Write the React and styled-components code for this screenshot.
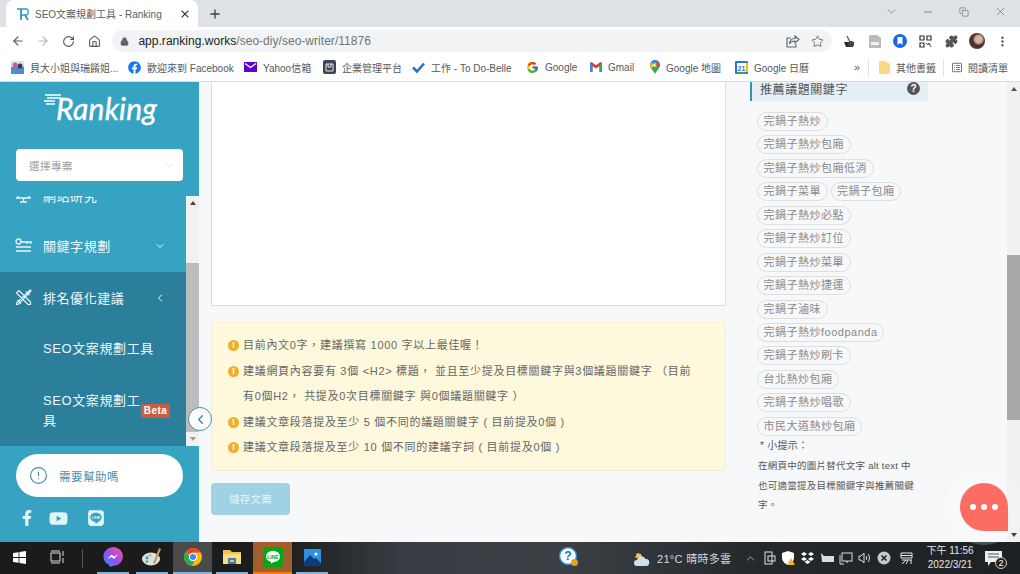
import React from "react";
import styled, { createGlobalStyle } from "styled-components";
import { ArrowLeft, ArrowRight, RotateCw, Home, Lock, Star, Puzzle, MoreVertical, Plus, X, ChevronDown, ChevronLeft, ChevronUp, Minus, Copy, AlertCircle } from "lucide-react";
import { FaFacebookF, FaYoutube, FaLine, FaFacebook } from "react-icons/fa";
import { FcGoogle } from "react-icons/fc";

const Global = createGlobalStyle`
  html, body { margin: 0; padding: 0; background: #fff; }
  * { box-sizing: border-box; }
  body { font-family: "Liberation Sans", "Noto Sans CJK TC", sans-serif; }
`;
const Root = styled.div`
  position: relative; width: 1020px; height: 574px; overflow: hidden;
  display: flex; flex-direction: column;
`;
const TabStrip = styled.div`
  height: 27px; background: #dee1e6; display: flex; align-items: stretch; padding-left: 6px; flex: none;
`;
const Tab = styled.div`
  width: 192px; background: #fff; border-radius: 8px 8px 0 0; display: flex; align-items: center;
  padding: 0 7px 0 11px; gap: 6px; font-size: 10px; color: #5a5e63;
`;
const TabTitle = styled.span` flex: 1; white-space: nowrap; `;
const NewTab = styled.div` width: 34px; display: flex; align-items: center; justify-content: center; color: #3c4043; `;
const WindowControls = styled.div`
  margin-left: auto; display: flex; align-items: center; color: #4a4d50; padding-right: 1px;
`;
const WinBtn = styled.div` width: 36.5px; display: flex; justify-content: center; align-items: center; padding-bottom: 4px; `;
const Toolbar = styled.div`
  height: 26px; flex: none; background: #fff; display: flex; align-items: center; color: #5f6368; padding: 2px 0 0 5px;
`;
const NavBtn = styled.div`
  width: 25.6px; display: flex; justify-content: center; color: ${p => p.$dim ? "#b6b9bd" : "#55585c"};
`;
const Address = styled.div`
  margin-left: 5px; width: 720px; height: 22px; background: #f1f3f4; border-radius: 11px; display: flex; align-items: center;
  padding: 0 2px 0 8px; font-size: 12px; color: #70757a;
`;
const Url = styled.span` margin-left: 9px; flex: 1; letter-spacing: 0.03px; b { font-weight: 400; color: #202124; } `;
const AddressIcon = styled.div` width: 25px; display: flex; justify-content: center; color: #5f6368; `;
const ExtArea = styled.div` display: flex; align-items: center; margin-left: 4px; `;
const Ext = styled.div` width: 25.5px; display: flex; justify-content: center; align-items: center; `;
const Avatar = styled.div`
  width: 16px; height: 16px; border-radius: 50%;
  background: radial-gradient(circle at 60% 40%, #d9b7a8 0 25%, #4a2c2a 45%, #6b4a52 100%);
`;
const Bookmarks = styled.div`
  height: 29px; flex: none; background: #fff; border-bottom: 1px solid #dadce0; display: flex; align-items: center;
  padding-left: 11px; font-size: 10px; color: #55585c;
`;
const Bookmark = styled.div`
  display: flex; align-items: center; gap: 6px; white-space: nowrap; width: ${p => p.$w}px; flex: none;
`;
const BookmarkSep = styled.div` width: 1px; height: 17px; background: #dfe1e5; margin-right: ${p => p.$mr}px; flex: none; `;
const Chevrons = styled.span` margin-left: 12px; font-size: 11px; width: 14px; flex: none; `;
const Page = styled.div` flex: 1; min-height: 0; display: flex; background: #f7f8fa; `;
const Sidebar = styled.aside`
  width: 199px; flex: none; background: #36a3c2; display: flex; flex-direction: column; color: #fff;
`;
const LogoWrap = styled.div`
  height: 67px; flex: none; display: flex; align-items: flex-start; justify-content: center; padding: 7px 0 0 1px;
`;
const LogoText = styled.span`
  font-family: Lato, sans-serif; font-style: italic; font-size: 30px; font-weight: 400; letter-spacing: 0.2px; line-height: 38px;
  -webkit-text-stroke: 0.4px #fff; margin-left: -5px;
`;
const SelectBox = styled.div`
  margin: 0 16px; height: 32px; flex: none; background: #fff; border-radius: 4px; display: flex; align-items: center;
  justify-content: space-between; padding: 0 7px 0 13px; font-size: 10.5px; color: #9a9a9a; letter-spacing: 0.5px;
`;
const NavArea = styled.div` margin-top: 15px; height: 250px; flex: none; display: flex; overflow: hidden; `;
const NavList = styled.nav` width: 186px; flex: none; margin-top: -26px; `;
const NavItem = styled.div`
  height: 51px; display: flex; align-items: center; padding: 0 20px ${p => p.$up ? 2 : 0}px 15px; font-size: 13px; letter-spacing: 0.55px; color: #eef8fb;
`;
const NavIcon = styled.div` width: 28px; flex: none; display: flex; `;
const NavLabel = styled.span` flex: 1; `;
const ActiveGroup = styled.div` background: #2b7f9b; height: 174px; `;
const SubItem = styled.div`
  position: relative; height: ${p => p.$h}px; padding-left: 43px; display: flex; align-items: center;
  font-size: 13px; letter-spacing: 0.6px; line-height: 20px; color: #eef8fb;
`;
const SubLabel = styled.span` max-width: ${p => p.$mw ? `${p.$mw}px` : "none"}; `;
const Beta = styled.span`
  position: absolute; left: 141px; top: 29px; width: 29px; height: 14px; border-radius: 2px; background: #cc5c3f;
  color: #fff; font-size: 10px; font-weight: 700; letter-spacing: 0.4px; line-height: 14px; text-align: center;
`;
const ScrollTrack = styled.div`
  width: 13px; flex: none; background: #f1f1f1; display: flex; flex-direction: column; align-items: center;
`;
const ArrowUp = styled.div`
  width: 0; height: 0; border-left: 3.5px solid transparent; border-right: 3.5px solid transparent; border-bottom: 4px solid ${p => p.$c};
  margin-top: 5px; flex: none;
`;
const ArrowDown = styled.div`
  width: 0; height: 0; border-left: 3.5px solid transparent; border-right: 3.5px solid transparent; border-top: 4px solid ${p => p.$c};
  margin-top: auto; margin-bottom: 5px; flex: none;
`;
const Thumb = styled.div`
  width: 100%; margin-top: ${p => p.$top}px; height: ${p => p.$h}px; background: ${p => p.$c}; flex: none;
`;
const SideFooter = styled.div` flex: 1; padding: 8px 16px 0; `;
const HelpBtn = styled.div`
  height: 43px; background: #fff; border-radius: 22px; display: flex; align-items: center; gap: 11px; padding-left: 13px;
  color: #4c8fa9; font-size: 11.5px; letter-spacing: 0.5px;
`;
const Socials = styled.div` display: flex; align-items: center; margin-top: 12px; color: #e4f3f7; padding-left: 3px; height: 18px; `;
const SocialIcon = styled.div` width: ${p => p.$w}px; flex: none; display: flex; `;
const Main = styled.main` width: 515px; flex: none; margin-left: 12px; `;
const Editor = styled.div` height: 224px; background: #fff; border: 1px solid #dcdee0; border-top: none; `;
const Alert = styled.div`
  margin-top: 16px; height: 149px; background: #fef8dd; border: 1px solid #f8eec6; border-radius: 4px; padding: 10px 30px 0 16px;
  font-size: 11px; color: #666; letter-spacing: 0.7px; line-height: 25.5px;
`;
const AlertRow = styled.div` display: flex; align-items: flex-start; gap: 4px; `;
const AlertDot = styled.span`
  width: 11px; height: 11px; border-radius: 50%; background: #efaf27; color: #fff; font-size: 9px; font-weight: 700; line-height: 11px;
  text-align: center; flex: none; margin-top: 7px; letter-spacing: 0;
`;
const SaveBtn = styled.button`
  margin-top: 12px; display: block; width: 79px; height: 32px; background: #9fd2e3; color: #e6f4f8; border: none; border-radius: 4px;
  font: inherit; font-size: 10.5px; letter-spacing: 0.3px; padding: 0 0 1px;
`;
const Right = styled.section` width: 178px; flex: none; margin-left: 24px; `;
const SectionHead = styled.div`
  height: 19px; background: #e4f0f6; border-left: 2px solid #3b90ad; display: flex; align-items: center; justify-content: space-between;
  padding: 0 8px 6px 8px; font-size: 12px; color: #555; letter-spacing: 0.57px; margin-bottom: 11px;
`;
const HeadHelp = styled.span`
  width: 13px; height: 13px; border-radius: 50%; background: #555; color: #fff; font-size: 10px; font-weight: 700; line-height: 13px; text-align: center; letter-spacing: 0;
`;
const ChipRow = styled.div` display: flex; gap: 3px; margin: 0 0 4.45px 7px; `;
const Chip = styled.span`
  height: 19px; padding: 0 5.5px; border: 1px solid #dcdee0; border-radius: 10px; font-size: 11px; letter-spacing: 0.5px; line-height: 17px;
  color: #8a8a8a; white-space: nowrap;
`;
const Hint = styled.div` margin: -4px 0 0 8px; width: 158px; font-size: 9.5px; line-height: 19.7px; color: #555; letter-spacing: 0.25px; `;
const HintHead = styled.div` padding-left: 2px; font-size: 10px; `;
const PageScroll = styled(ScrollTrack)` margin-left: auto; `;
const Collapse = styled.div`
  position: absolute; left: 188px; top: 407px; width: 24px; height: 24px; border-radius: 50%; background: #fff; border: 1px solid #3f8fac;
  display: flex; align-items: center; justify-content: center; color: #2f87a8;
`;
const ChatHalo = styled.div`
  position: absolute; left: 946px; top: 469px; width: 76px; height: 76px; border-radius: 50%; background: rgba(255,255,255,0.2);
`;
const Chat = styled.div`
  position: absolute; left: 960px; top: 483px; width: 48px; height: 48px; background: #fb6d63; border-radius: 50% 50% 0 50%;
  display: flex; align-items: center; justify-content: center; gap: 5px;
`;
const ChatDot = styled.span` width: 6px; height: 6px; border-radius: 50%; background: #fff; `;
const Taskbar = styled.div`
  height: 32px; flex: none; display: flex; align-items: stretch; color: #fff;
  background: linear-gradient(90deg, #1b1b1b 0, #1c1c1c 280px, #373d42 400px, #3b4045 560px, #24282b 760px, #1e2124 1020px);
`;
const TaskSlot = styled.div`
  width: ${p => p.$w}px; margin-left: ${p => p.$ml || 0}px; flex: none; display: flex; align-items: center; justify-content: center; position: relative;
  background: ${p => p.$bg || "transparent"}; padding-bottom: 2px;
  &::after {
    content: ""; display: ${p => p.$line ? "block" : "none"}; position: absolute; left: 0; right: 0; bottom: 0; height: 2px; background: ${p => p.$line};
  }
`;
const Divider = styled.div` width: 1px; height: 19px; background: #555; align-self: center; margin-left: 6px; `;
const Weather = styled.div`
  margin-left: 53px; display: flex; align-items: center; gap: 7px; font-size: 11px; color: #d5d7d9; width: 109px; flex: none; letter-spacing: 0.3px;
`;
const Tray = styled.div` display: flex; align-items: center; color: #e8e8e8; flex: none; `;
const TrayIcon = styled.div` width: 19px; margin-left: ${p => p.$ml || 0}px; display: flex; justify-content: center; align-items: center; `;
const Clock = styled.div`
  margin-left: 9px; width: 50px; flex: none; font-size: 10px; line-height: 14.5px; color: #e6e6e6; text-align: center; align-self: center;
`;
const Notify = styled.div`
  position: relative; margin-left: 7px; width: 22px; display: flex; align-items: center; justify-content: center; flex: none;
`;
const NotifyBadge = styled.span`
  position: absolute; right: -3px; top: 15px; width: 12px; height: 12px; border-radius: 50%; background: #222; border: 1px solid #ccc; font-size: 9px; line-height: 10px; text-align: center; color: #fff;
`;

const RLogo = () => (
  <svg width="12" height="14" viewBox="0 0 12 14" fill="none" stroke="#58b5c9" strokeWidth="1.8">
    <path d="M0 2h9c3 0 3 6 0 6H4" /><path d="M4 2v11M8 8l3 5" stroke="#3a93ad" />
  </svg>
);
const LogoLines = () => (
  <svg width="18" height="30" viewBox="0 0 18 30" fill="none" stroke="#fff" strokeWidth="1.4">
    <path d="M2 6h16M4 9h14M1 12h11M3 15h9" />
  </svg>
);
const ShareBox = () => (
  <svg width="14" height="13" viewBox="0 0 14 13" fill="none" stroke="#5f6368" strokeWidth="1.1">
    <path d="M5 3H1v9h9V9" /><path d="M9 1l4 3.5L9 8V6C6 6 4.5 7 3.5 9c0-3.5 2-5.5 5.5-5.5z" />
  </svg>
);
const ReadingList = () => (
  <svg width="13" height="13" viewBox="0 0 13 13" fill="none" stroke="#555" strokeWidth="1.1">
    <rect x="0.6" y="1" width="11.8" height="11" rx="1" /><path d="M3 4h1M5.5 4H10M3 6.5h1M5.5 6.5H10M3 9h1M5.5 9H10" />
  </svg>
);
const Multi = () => (
  <svg width="13" height="13" viewBox="0 0 13 13"><rect width="13" height="13" fill="#e9d8ef" /><rect y="6" width="13" height="7" fill="#4d8ccf" /><circle cx="4" cy="4" r="2.5" fill="#c35b8f" /><circle cx="9" cy="5" r="2.5" fill="#3a3a55" /></svg>
);
const YahooMail = () => (
  <svg width="13" height="10" viewBox="0 0 13 10"><rect width="13" height="10" fill="#5f01d1" /><path d="M1 1.5l5.5 4 5.5-4" fill="none" stroke="#fff" strokeWidth="1.4" /></svg>
);
const BizIcon = () => (
  <svg width="13" height="14" viewBox="0 0 13 14"><rect width="13" height="14" rx="2" fill="#3c4557" /><path d="M3 4h7v7H3zM5 4v3h3V4" fill="none" stroke="#e8e8e8" strokeWidth="1" /></svg>
);
const TodoIcon = () => (
  <svg width="13" height="11" viewBox="0 0 13 11"><path d="M1 5.5l4 4 7-8" fill="none" stroke="#2f6fd0" strokeWidth="2.6" /></svg>
);
const Gmail = () => (
  <svg width="12" height="10" viewBox="0 0 12 10"><path d="M0 1v9h2.5V4L6 6.6 9.5 4v6H12V1L10.5 0 6 3.3 1.5 0z" fill="#d93f30" /><path d="M0 1v9h2.5V3z" fill="#4285f4" /><path d="M12 1v9H9.5V3z" fill="#34a853" /></svg>
);
const Maps = () => (
  <svg width="10" height="14" viewBox="0 0 10 14"><path d="M5 14C3 10 0 8 0 5a5 5 0 0 1 10 0c0 3-3 5-5 9z" fill="#34a853" /><path d="M1 2l4 3-4 4c-1-2-1-5 0-7z" fill="#fbbc04" /><path d="M1 2a5 5 0 0 1 7-1L5 5z" fill="#4285f4" /><circle cx="5" cy="5" r="1.8" fill="#fff" /><path d="M8 1.3A5 5 0 0 1 9.5 7L5 5z" fill="#ea4335" /></svg>
);
const Calendar = () => (
  <svg width="13" height="13" viewBox="0 0 13 13"><rect width="13" height="13" rx="1" fill="#2f6fd6" /><rect x="2" y="2" width="9" height="9" fill="#fff" /><rect x="11" y="2" width="2" height="9" fill="#fbbc04" /><rect x="2" y="11" width="9" height="2" fill="#34a853" /><text x="6.5" y="9.5" fontSize="7" fontWeight="700" textAnchor="middle" fill="#2f6fd6" fontFamily="Liberation Sans">21</text></svg>
);
const FolderIcon = () => (
  <svg width="11" height="13" viewBox="0 0 11 13"><path d="M0 1a1 1 0 0 1 1-1h5l5 3v9a1 1 0 0 1-1 1H1a1 1 0 0 1-1-1z" fill="#fbd982" /></svg>
);
const MugExt = () => (
  <svg width="13" height="13" viewBox="0 0 13 13"><path d="M1 7h10l-1 5H3z" fill="#2b2b2b" /><path d="M4 1l3 6" stroke="#8a5b3a" strokeWidth="1.4" /><circle cx="8" cy="9" r="3" fill="#444" /></svg>
);
const DocExt = () => (
  <svg width="12" height="14" viewBox="0 0 12 14"><path d="M0 1h8l4 3v10H0z" fill="#b9bbbd" /><rect x="2" y="8" width="8" height="3" fill="#f1f1f1" /></svg>
);
const BlueExt = () => (
  <svg width="14" height="14" viewBox="0 0 14 14"><circle cx="7" cy="7" r="7" fill="#1967e4" /><path d="M4.5 3h5v8L7 9l-2.5 2z" fill="#fff" /></svg>
);
const QrExt = () => (
  <svg width="13" height="13" viewBox="0 0 13 13"><rect width="13" height="13" fill="#fff" /><path d="M1 1h4v4H1zM8 1h4v4H8zM1 8h4v4H1z" fill="none" stroke="#333" strokeWidth="1.2" /><path d="M7 8l2 2 1-2 2 4" fill="none" stroke="#444" /></svg>
);
const MonitorIcon = () => (
  <svg width="17" height="15" viewBox="0 0 17 15" fill="none" stroke="#e8f6fa" strokeWidth="1.3"><path d="M1 3h15M1 10h15M8.5 10v4M5 14h7M3 3v7M14 3v7" /></svg>
);
const KeywordIcon = () => (
  <svg width="17" height="15" viewBox="0 0 17 15" fill="none" stroke="#e8f6fa" strokeWidth="1.3"><circle cx="3.5" cy="3.5" r="2.5" /><path d="M6 4h10v2M1 9h15M1 13h15M12 4v2" /></svg>
);
const ToolsIcon = () => (
  <svg width="17" height="17" viewBox="0 0 17 17" fill="none" stroke="#e8f6fa" strokeWidth="1.2"><path d="M1.5 4L4 1.5l11.5 11.5v2.5H13zM15 1l1 1-13 13.5H1.5V14zM11 2.5l3.5 3.5M2.5 11l3.5 3.5" /></svg>
);
const WinLogo = () => (
  <svg width="13" height="13" viewBox="0 0 13 13" fill="#fff"><path d="M0 2l5.6-.8V6H0zM6.4 1l6.6-1v6H6.4zM0 7h5.6v4.8L0 11zM6.4 7H13v6l-6.6-1z" /></svg>
);
const TaskView = () => (
  <svg width="14" height="14" viewBox="0 0 14 14" fill="none" stroke="#ddd" strokeWidth="1"><rect x="1" y="3" width="9" height="8" /><path d="M1 1h9M1 13h9M13 1v5M13 8v5" /></svg>
);
const Messenger = () => (
  <svg width="20" height="20" viewBox="0 0 20 20"><defs><linearGradient id="ms" x1="0" y1="1" x2="1" y2="0"><stop offset="0" stopColor="#2e8cff" /><stop offset=".5" stopColor="#9a4cf0" /><stop offset="1" stopColor="#ff5c87" /></linearGradient></defs><path d="M10 0a10 9.5 0 0 1 0 19l-3 1-1-2A10 9.5 0 0 1 10 0z" fill="url(#ms)" /><path d="M4.5 12l4-4.5 2.5 2 4-2-4 4.5-2.5-2z" fill="#fff" /></svg>
);
const Palette = () => (
  <svg width="20" height="20" viewBox="0 0 20 20"><ellipse cx="9" cy="12" rx="9" ry="6.5" fill="#d9e0e4" /><circle cx="5" cy="11" r="1.4" fill="#3f86d8" /><circle cx="8" cy="8.5" r="1.3" fill="#e2b23a" /><circle cx="5" cy="14.5" r="1.3" fill="#4caf50" /><path d="M17 1l2 1-6 15-2-1z" fill="#c89a5d" /></svg>
);
const ChromeIcon = () => (
  <svg width="18" height="18" viewBox="0 0 18 18"><circle cx="9" cy="9" r="9" fill="#fbbc04" /><path d="M9 0a9 9 0 0 1 7.8 4.5H9A4.5 4.5 0 0 0 5 7L2.2 3.2A9 9 0 0 1 9 0z" fill="#ea4335" /><path d="M2.2 3.2L6 10a4.5 4.5 0 0 0 4.4 3.3L8 18A9 9 0 0 1 2.2 3.2z" fill="#34a853" /><circle cx="9" cy="9" r="4" fill="#fff" /><circle cx="9" cy="9" r="3" fill="#4285f4" /></svg>
);
const Explorer = () => (
  <svg width="18" height="16" viewBox="0 0 18 16"><path d="M0 1h7l2 2h9v12H0z" fill="#f2c14e" /><rect y="5" width="18" height="10" fill="#fbdc86" /><rect x="5" y="9" width="8" height="6" fill="#3d7fb0" /><rect x="7" y="11" width="4" height="2" fill="#f2c14e" /></svg>
);
const LineApp = () => (
  <svg width="20" height="20" viewBox="0 0 20 20"><rect width="20" height="20" rx="3" fill="#00a90f" /><ellipse cx="10" cy="9.5" rx="7" ry="5.8" fill="#fff" /><path d="M8 14l3 0-3 3z" fill="#fff" /><text x="10" y="11.5" fontSize="5" fontWeight="700" textAnchor="middle" fill="#00a90f" fontFamily="Liberation Sans">LINE</text></svg>
);
const Photos = () => (
  <svg width="17" height="17" viewBox="0 0 17 17"><rect width="17" height="17" fill="#2c8fe0" /><path d="M0 13l6-7 4 4 2-1 5 5v3H0z" fill="#0f3d78" /><circle cx="12" cy="5" r="1.6" fill="#fff" /></svg>
);
const HelpApp = () => (
  <svg width="20" height="20" viewBox="0 0 20 20"><circle cx="9" cy="9" r="8.5" fill="#f4fafd" stroke="#2a88c8" strokeWidth="1.4" /><text x="9" y="13" fontSize="12" fontWeight="700" textAnchor="middle" fill="#1e78b8" fontFamily="Liberation Sans">?</text><circle cx="15.5" cy="15.5" r="3.5" fill="#e2a21a" /></svg>
);
const Cloud = () => (
  <svg width="18" height="17" viewBox="0 0 18 17"><path d="M3 8l2-5 4 1 1 3z" fill="#f5c542" /><path d="M5 16a3 3 0 0 1 0-6 4.5 4.5 0 0 1 8.5-1A3.5 3.5 0 0 1 14 16z" fill="#cfe1ef" /></svg>
);
const Shield = () => (
  <svg width="13" height="14" viewBox="0 0 13 14"><path d="M6 0l6 2v5c0 3-3 6-6 7-3-1-6-4-6-7V2z" fill="#fff" /><path d="M9 7l4 7H5z" fill="#f0b429" /></svg>
);
const Dropbox = () => (
  <svg width="13" height="12" viewBox="0 0 13 12" fill="#fff"><path d="M3 0l3 2-3 2-3-2zM10 0l3 2-3 2-3-2zM3 5l3 2-3 2-3-2zM10 5l3 2-3 2-3-2zM6.5 8l3 2-3 2-3-2z" /></svg>
);
const Battery = () => (
  <svg width="14" height="10" viewBox="0 0 14 10"><path d="M1 0l3 3h10v6H2z" fill="#ddd" /></svg>
);
const Net = () => (
  <svg width="14" height="13" viewBox="0 0 14 13" fill="none" stroke="#ddd"><rect x="3" y="1" width="10" height="8" /><path d="M1 3v9h4M8 9v2" /></svg>
);
const Volume = () => (
  <svg width="13" height="12" viewBox="0 0 13 12" fill="none" stroke="#ddd"><path d="M1 4h2l3-3v10L3 8H1zM8 4c1 1 1 3 0 4M10 2c2 2 2 6 0 8" /></svg>
);
const XCircle = () => (
  <svg width="14" height="14" viewBox="0 0 14 14"><circle cx="7" cy="7" r="6.5" fill="#c9c9c9" /><path d="M4.5 4.5l5 5M9.5 4.5l-5 5" stroke="#222" strokeWidth="1.6" /></svg>
);
const Ime = () => (
  <svg width="13" height="13" viewBox="0 0 13 13" fill="none" stroke="#e8e8e8"><path d="M1 1h11v5H1zM1 3.5h11M2 8h10M6 8l-4 4M8 8l-2 4M11 8v4" /></svg>
);
const Note = () => (
  <svg width="17" height="15" viewBox="0 0 17 15"><path d="M0 0h17v11H6l-3 4v-4H0z" fill="#eee" /><path d="M3 3h11M3 6h11" stroke="#555" /></svg>
);
const TrayCam = () => (
  <svg width="12" height="14" viewBox="0 0 12 14" fill="none" stroke="#ddd"><rect x="1" y="1" width="7" height="12" /><rect x="4" y="5" width="7" height="5" /></svg>
);

const chips = [
  ["完鍋子熱炒"], ["完鍋子熱炒包廂"], ["完鍋子熱炒包廂低消"], ["完鍋子菜單", "完鍋子包廂"], ["完鍋子熱炒必點"],
  ["完鍋子熱炒訂位"], ["完鍋子熱炒菜單"], ["完鍋子熱炒捷運"], ["完鍋子滷味"], ["完鍋子熱炒foodpanda"], ["完鍋子熱炒刷卡"],
  ["台北熱炒包廂"], ["完鍋子熱炒唱歌"], ["市民大道熱炒包廂"],
];
const alerts = [
  "目前內文0字，建議撰寫 1000 字以上最佳喔！",
  "建議網頁內容要有 3個 <H2> 標題， 並且至少提及目標關鍵字與3個議題關鍵字 （目前有0個H2， 共提及0次目標關鍵字 與0個議題關鍵字 ）",
  "建議文章段落提及至少 5 個不同的議題關鍵字 ( 目前提及0個 )",
  "建議文章段落提及至少 10 個不同的建議字詞 ( 目前提及0個 )",
];
const marks = [
  { w: 117, icon: <Multi />, t: "貝大小姐與瑞餚姐..." },
  { w: 116, icon: <FaFacebook size={13} color="#1877f2" />, t: "歡迎來到 Facebook" },
  { w: 79, icon: <YahooMail />, t: "Yahoo信箱" },
  { w: 89, icon: <BizIcon />, t: "企業管理平台" },
  { w: 114, icon: <TodoIcon />, t: "工作 - To Do-Belle" },
  { w: 64, icon: <FcGoogle size={13} />, t: "Google" },
  { w: 60, icon: <Gmail />, t: "Gmail" },
  { w: 85, icon: <Maps />, t: "Google 地圖" },
  { w: 107, icon: <Calendar />, t: "Google 日曆" },
];

export default function App() {
  return (
    <Root>
      <Global />
      <TabStrip>
        <Tab>
          <RLogo />
          <TabTitle>SEO文案規劃工具 - Ranking</TabTitle>
          <X size={12} color="#3c4043" strokeWidth={2.2} />
        </Tab>
        <NewTab><Plus size={14} strokeWidth={2.2} /></NewTab>
        <WindowControls>
          <WinBtn><ChevronDown size={13} strokeWidth={1} /></WinBtn>
          <WinBtn><Minus size={12} strokeWidth={1.2} /></WinBtn>
          <WinBtn><Copy size={10} strokeWidth={1.2} /></WinBtn>
          <WinBtn><X size={13} strokeWidth={1} /></WinBtn>
        </WindowControls>
      </TabStrip>
      <Toolbar>
        <NavBtn><ArrowLeft size={14} /></NavBtn>
        <NavBtn $dim><ArrowRight size={14} /></NavBtn>
        <NavBtn><RotateCw size={13} /></NavBtn>
        <NavBtn><Home size={13} /></NavBtn>
        <Address>
          <Lock size={9} color="#5f6368" fill="#5f6368" />
          <Url><b>app.ranking.works</b>/seo-diy/seo-writer/11876</Url>
          <AddressIcon><ShareBox /></AddressIcon>
          <AddressIcon><Star size={13} strokeWidth={1.6} /></AddressIcon>
        </Address>
        <ExtArea>
          <Ext><MugExt /></Ext>
          <Ext><DocExt /></Ext>
          <Ext><BlueExt /></Ext>
          <Ext><QrExt /></Ext>
          <Ext><Puzzle size={13} color="#555" fill="#555" /></Ext>
          <Ext><Avatar /></Ext>
          <Ext><MoreVertical size={13} color="#555" strokeWidth={2.4} /></Ext>
        </ExtArea>
      </Toolbar>
      <Bookmarks>
        {marks.map(m => <Bookmark key={m.t} $w={m.w}>{m.icon}<span>{m.t}</span></Bookmark>)}
        <Chevrons>»</Chevrons>
        <BookmarkSep $mr={10} />
        <Bookmark $w={64}><FolderIcon /><span>其他書籤</span></Bookmark>
        <BookmarkSep $mr={8} />
        <Bookmark $w={56}><ReadingList /><span>閱讀清單</span></Bookmark>
      </Bookmarks>
      <Page>
        <Sidebar>
          <LogoWrap><LogoLines /><LogoText>Ranking</LogoText></LogoWrap>
          <SelectBox>選擇專案<ChevronDown size={13} color="#c9c9c9" strokeWidth={1} /></SelectBox>
          <NavArea>
            <NavList>
              <NavItem><NavIcon><MonitorIcon /></NavIcon><NavLabel>網站研究</NavLabel></NavItem>
              <NavItem $up><NavIcon><KeywordIcon /></NavIcon><NavLabel>關鍵字規劃</NavLabel><ChevronDown size={12} /></NavItem>
              <ActiveGroup>
                <NavItem><NavIcon><ToolsIcon /></NavIcon><NavLabel>排名優化建議</NavLabel><ChevronLeft size={12} /></NavItem>
                <SubItem $h={52}><SubLabel>SEO文案規劃工具</SubLabel></SubItem>
                <SubItem $h={71}><SubLabel $mw={100}>SEO文案規劃工具</SubLabel><Beta>Beta</Beta></SubItem>
              </ActiveGroup>
            </NavList>
            <ScrollTrack>
              <ArrowUp $c="#444" />
              <Thumb $top={58} $h={169} $c="#bcbcbc" />
              <ArrowDown $c="#999" />
            </ScrollTrack>
          </NavArea>
          <SideFooter>
            <HelpBtn><AlertCircle size={19} strokeWidth={1.5} />需要幫助嗎</HelpBtn>
            <Socials>
              <SocialIcon $w={30}><FaFacebookF size={16} /></SocialIcon>
              <SocialIcon $w={38}><FaYoutube size={19} /></SocialIcon>
              <SocialIcon $w={20}><FaLine size={18} /></SocialIcon>
            </Socials>
          </SideFooter>
        </Sidebar>
        <Main>
          <Editor />
          <Alert>
            {alerts.map(a => <AlertRow key={a}><AlertDot>!</AlertDot><span>{a}</span></AlertRow>)}
          </Alert>
          <SaveBtn>儲存文案</SaveBtn>
        </Main>
        <Right>
          <SectionHead>推薦議題關鍵字<HeadHelp>?</HeadHelp></SectionHead>
          {chips.map(r => <ChipRow key={r[0]}>{r.map(c => <Chip key={c}>{c}</Chip>)}</ChipRow>)}
          <Hint>
            <HintHead>* 小提示：</HintHead>
            在網頁中的圖片替代文字 alt text 中也可適當提及目標關鍵字與推薦關鍵字。
          </Hint>
        </Right>
        <PageScroll>
          <ArrowUp $c="#555" />
          <Thumb $top={164} $h={165} $c="#a8a8a8" />
          <ArrowDown $c="#444" />
        </PageScroll>
      </Page>
      <Taskbar>
        <TaskSlot $w={38}><WinLogo /></TaskSlot>
        <TaskSlot $w={38}><TaskView /></TaskSlot>
        <Divider />
        <TaskSlot $w={32} $ml={14} $line="#7fb5da"><Messenger /></TaskSlot>
        <TaskSlot $w={32} $ml={7} $line="#7fb5da"><Palette /></TaskSlot>
        <TaskSlot $w={39} $ml={5} $bg="#4a4a4a" $line="#7fb5da"><ChromeIcon /></TaskSlot>
        <TaskSlot $w={32} $ml={4} $line="#7fb5da"><Explorer /></TaskSlot>
        <TaskSlot $w={39} $ml={5} $bg="#a05f2c" $line="#ff7a00"><LineApp /></TaskSlot>
        <TaskSlot $w={32} $ml={4} $line="#7fb5da"><Photos /></TaskSlot>
        <TaskSlot $w={20} $ml={231}><HelpApp /></TaskSlot>
        <Weather><Cloud />21°C 晴時多雲</Weather>
        <Tray>
          <TrayIcon><ChevronUp size={13} strokeWidth={1.2} /></TrayIcon>
          <TrayIcon><TrayCam /></TrayIcon>
          <TrayIcon><Shield /></TrayIcon>
          <TrayIcon><Dropbox /></TrayIcon>
          <TrayIcon><Battery /></TrayIcon>
          <TrayIcon><Net /></TrayIcon>
          <TrayIcon><Volume /></TrayIcon>
          <TrayIcon><XCircle /></TrayIcon>
          <TrayIcon $ml={4}><Ime /></TrayIcon>
        </Tray>
        <Clock>下午 11:56<br />2022/3/21</Clock>
        <Notify><Note /><NotifyBadge>2</NotifyBadge></Notify>
      </Taskbar>
      <Collapse><ChevronLeft size={15} strokeWidth={2.2} /></Collapse>
      <ChatHalo />
      <Chat><ChatDot /><ChatDot /><ChatDot /></Chat>
    </Root>
  );
}
